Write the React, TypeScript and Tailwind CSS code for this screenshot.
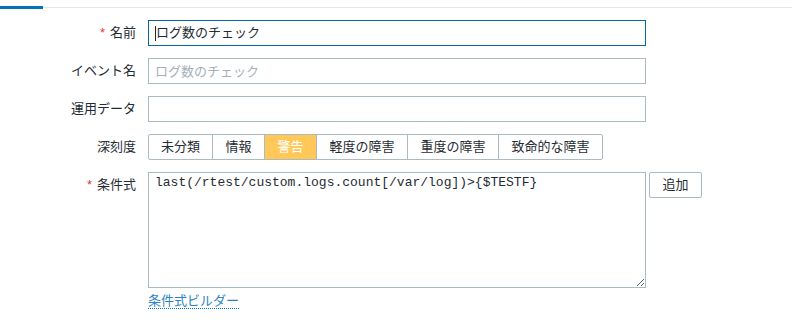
import React from 'react';

const font = { fontFamily: '"Liberation Sans", "Noto Sans CJK JP", sans-serif' };

const severities = [
  { label: '未分類', w: 'w-[63px]' },
  { label: '情報', w: 'w-[52px]' },
  { label: '警告', w: 'w-[52px]', active: true },
  { label: '軽度の障害', w: 'w-[91px]' },
  { label: '重度の障害', w: 'w-[91px]' },
  { label: '致命的な障害', w: 'w-[104px]' },
];

function Label({ text, required }: { text: string; required?: boolean }) {
  return (
    <div className="w-[136px] shrink-0 text-right text-[13px] leading-[26px] text-[#1f2c33]">
      {required && <span className="text-[#e33734] mr-[5px]">*</span>}
      {text}
    </div>
  );
}

export default function App() {
  return (
    <div className="w-[792px] h-[325px] bg-white overflow-hidden" style={font}>
      {/* Tab strip */}
      <div className="flex items-start pt-[6px]">
        <div className="w-[43px] h-[3px] bg-[#0275b8]" />
        <div className="flex-1 h-px mt-[1px] bg-[#e3e6e8]" />
      </div>

      <div className="flex flex-col gap-[12px] mt-[11px]">
        {/* 名前 */}
        <div className="flex gap-[12px]">
          <Label text="名前" required />
          <div className="w-[498px] h-[26px] border border-[#0a66a3] flex items-center pl-[6px] text-[13px] text-[#1f2c33]">
            <span className="w-px h-[15px] bg-[#1f2c33]" />
            ログ数のチェック
          </div>
        </div>

        {/* イベント名 */}
        <div className="flex gap-[12px]">
          <Label text="イベント名" />
          <input
            readOnly
            placeholder="ログ数のチェック"
            className="w-[498px] h-[26px] border border-[#acbbc2] px-[6px] text-[13px] text-[#1f2c33] placeholder:text-[#a5b1b7] outline-none"
            style={font}
          />
        </div>

        {/* 運用データ */}
        <div className="flex gap-[12px]">
          <Label text="運用データ" />
          <input
            readOnly
            className="w-[498px] h-[26px] border border-[#acbbc2] px-[6px] text-[13px] outline-none"
            style={font}
          />
        </div>

        {/* 深刻度 */}
        <div className="flex gap-[12px]">
          <Label text="深刻度" />
          <div className="flex h-[26px] border border-[#acbbc2] rounded-[2px] overflow-hidden">
            {severities.map((s, i) => (
              <div
                key={s.label}
                className={`${s.w} flex items-center justify-center text-[13px] ${
                  i > 0 ? 'border-l border-[#acbbc2]' : ''
                } ${s.active ? 'bg-[#ffc859] text-white' : 'text-[#1f2c33]'}`}
              >
                {s.label}
              </div>
            ))}
          </div>
        </div>

        {/* 条件式 */}
        <div className="flex gap-[12px]">
          <Label text="条件式" required />
          <div className="flex flex-col">
            <div className="flex items-start gap-[3px]">
              <textarea
                readOnly
                value="last(/rtest/custom.logs.count[/var/log])>{$TESTF}"
                className="w-[498px] h-[116px] border border-[#acbbc2] px-[6px] py-[2px] text-[13px] leading-[16px] text-[#1f2c33] outline-none"
                style={{ fontFamily: '"Liberation Mono", "Courier New", monospace' }}
              />
              <button className="w-[53px] h-[26px] border border-[#acbbc2] rounded-[2px] bg-white text-[13px] text-[#1f2c33]">
                追加
              </button>
            </div>
            <div>
              <span className="text-[13px] leading-[16px] text-[#2d84c4] border-b border-dotted border-[#0275b8]">
                条件式ビルダー
              </span>
            </div>
          </div>
        </div>
      </div>
    </div>
  );
}
